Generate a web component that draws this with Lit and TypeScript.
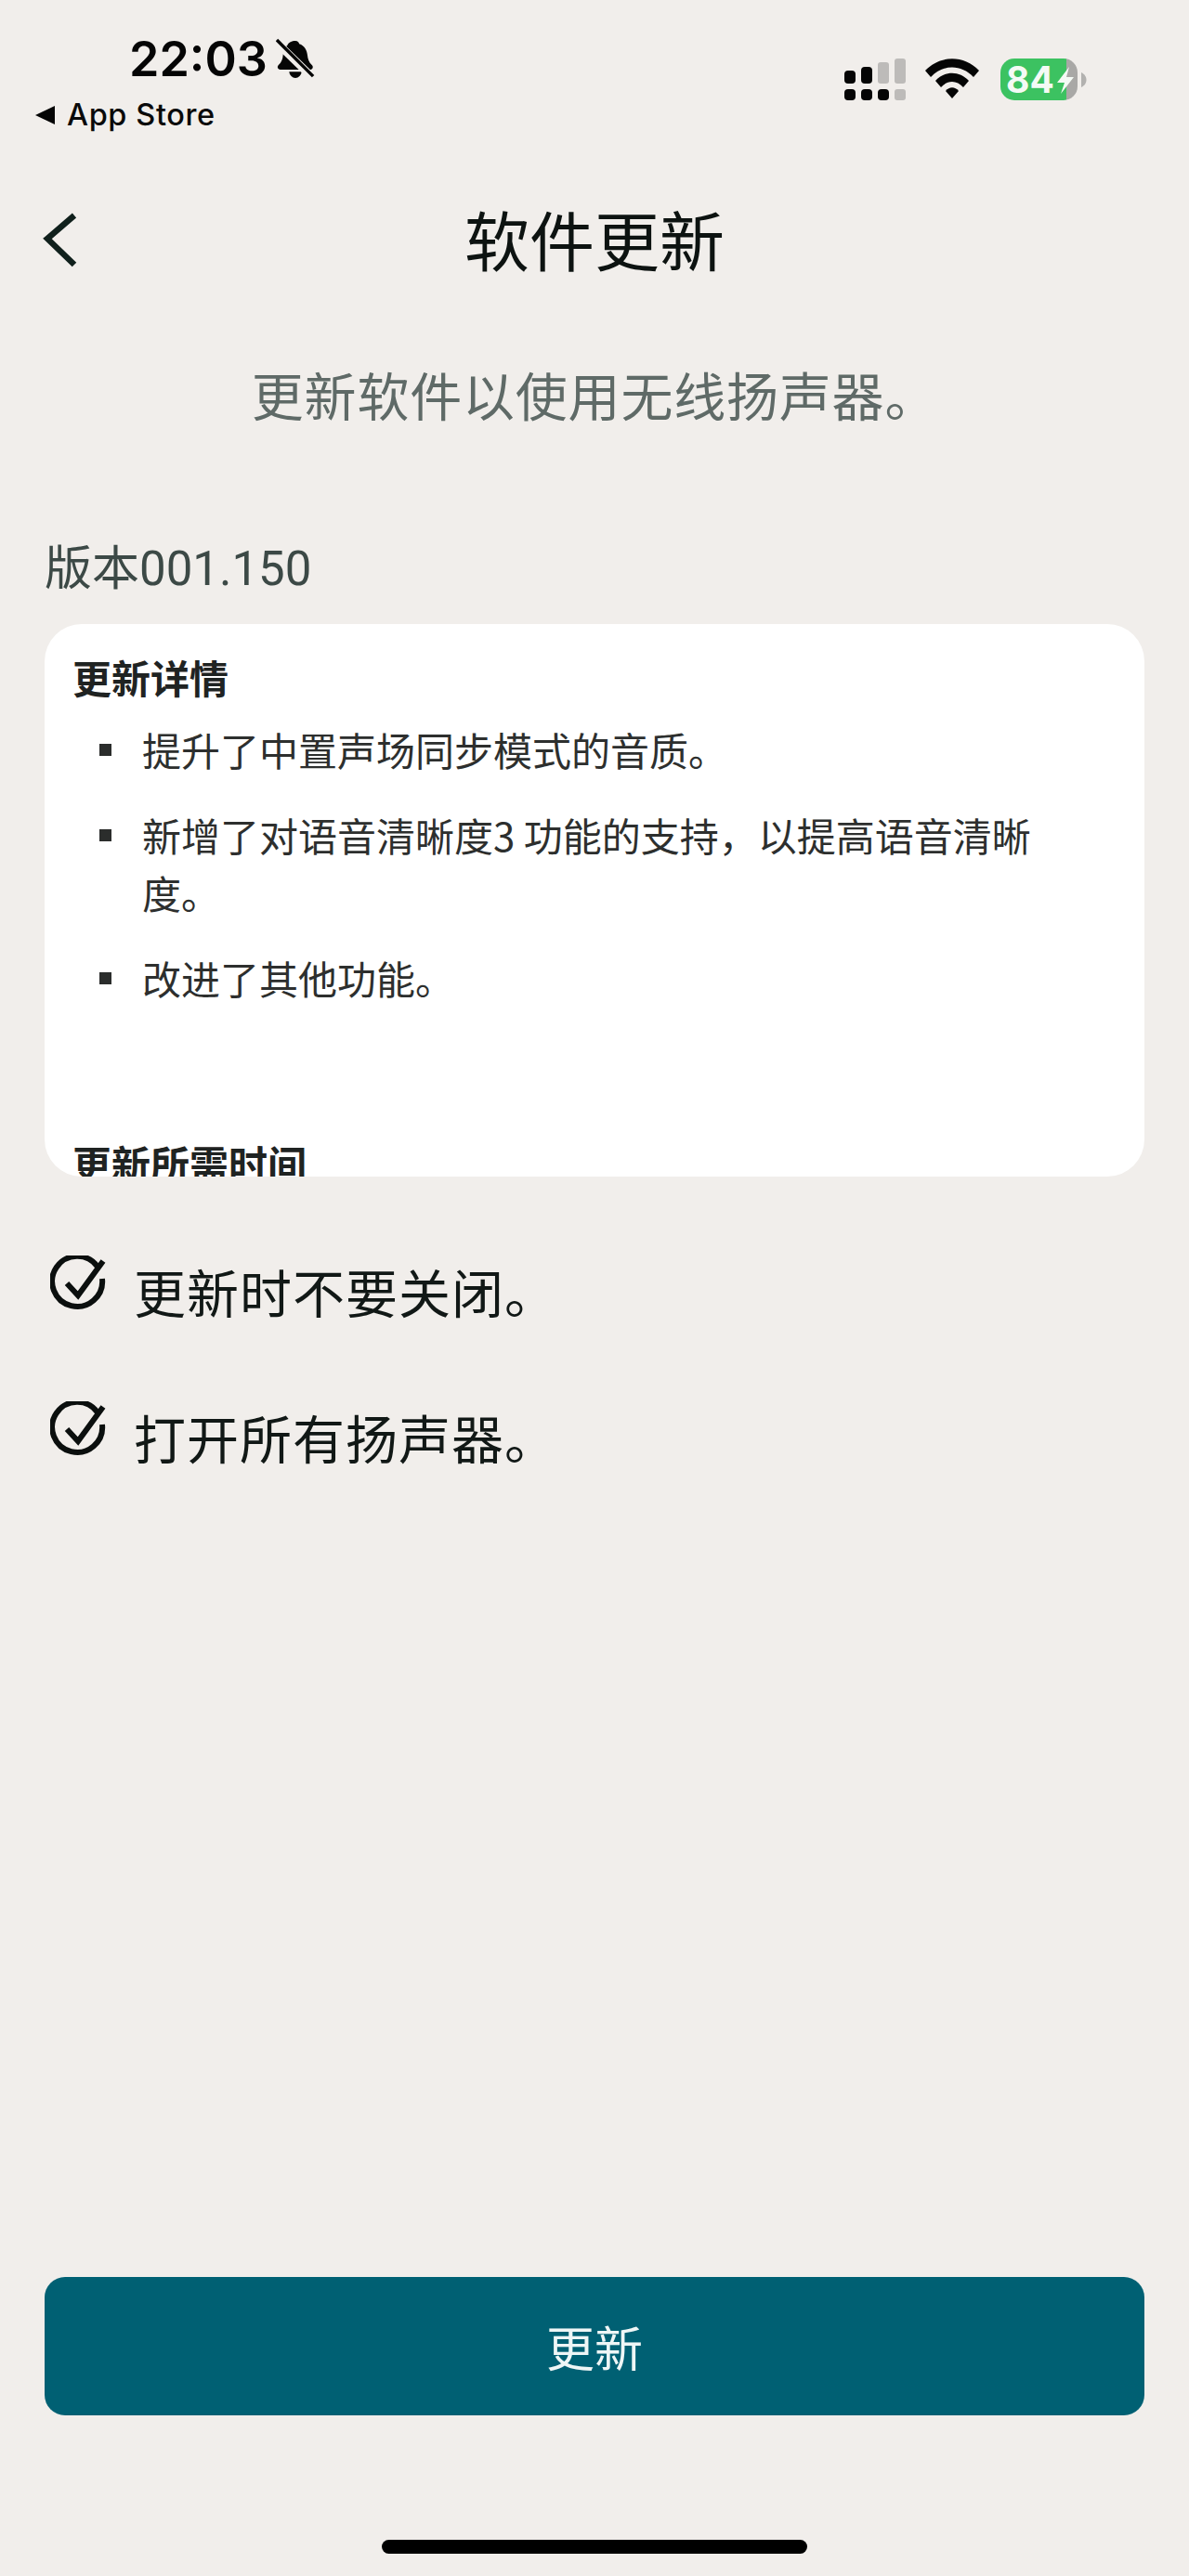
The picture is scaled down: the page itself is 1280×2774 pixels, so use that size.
import { LitElement, html, css, svg } from "lit";
import { customElement } from "lit/decorators.js";

const checkIcon = svg`<svg class="check" width="62" height="62" viewBox="0 0 62 62" fill="none" stroke="#0b0f0e" stroke-width="6">
  <path d="M51 12 A27 27 0 1 0 56 25"/>
  <path d="M18 30 L30 43 L57 6"/>
</svg>`;

@customElement("app-root")
export class AppRoot extends LitElement {
  static styles = css`
    :host { display: block; width: 1280px; height: 2774px; background: #f1eeeb; font-family: "Noto Sans CJK SC", "Noto Sans", sans-serif; overflow: hidden; }
    .page { display: flex; flex-direction: column; height: 2774px; position: relative; }

    .status { height: 205px; display: flex; justify-content: space-between; flex: none; }
    .status-left { padding: 37px 0 0 38px; display: flex; flex-direction: column; }
    .time-row { display: flex; align-items: center; gap: 9px; margin-left: 101px; height: 54px; }
    .time { font: 600 52px/54px Inter, "Liberation Sans", sans-serif; color: #050505; }
    .back-app { display: flex; align-items: center; gap: 12px; margin-top: 16px; height: 34px; }
    .back-app span { font: 500 32.5px/34px Inter, "Liberation Sans", sans-serif; color: #0a0a0a; letter-spacing: 0.6px; }
    .status-right { display: flex; align-items: flex-start; padding: 63px 110px 0 0; gap: 23px; }
    .signal { margin-right: -2px; }

    .nav { height: 104px; flex: none; display: flex; align-items: center; justify-content: center; position: relative; }
    .nav h1 { margin: 0; font-size: 70px; font-weight: 400; line-height: 104px; color: #0d1311; }
    .back { position: absolute; left: 46px; top: 24px; }

    .sub { margin: 73px 0 0; text-align: center; font-size: 56px; letter-spacing: 0.8px; line-height: 84px; color: #5f6a67; font-weight: 400; flex: none; }

    .version { margin: 104px 0 0 48px; font-size: 51px; line-height: 76px; color: #3c4946; flex: none; }
    .version .num { font-family: Roboto, sans-serif; }

    .card { margin: 21px 48px 0; height: 595px; background: #fff; border-radius: 40px; overflow: hidden; flex: none; box-sizing: border-box; padding: 28px 30px 0; }
    .card h2 { margin: 0; font-size: 42px; line-height: 58px; font-weight: 700; color: #1f2322; }
    .card ul { list-style: none; margin: 18px 0 0; padding: 0 70px 0 0; display: flex; flex-direction: column; gap: 30px; }
    .card li { display: flex; align-items: flex-start; font-size: 42px; line-height: 62px; color: #2d2f2e; }
    .bullet { width: 13px; height: 13px; background: #2b2d2c; margin: 25px 33px 0 29px; flex: none; }
    .card h2.next { margin-top: 139px; }

    .checks { margin: 87px 0 0 54px; display: flex; flex-direction: column; gap: 79px; flex: none; }
    .check-row { display: flex; align-items: flex-start; gap: 28px; height: 78px; }
    .check-row span { font-size: 56px; letter-spacing: 1px; line-height: 78px; color: #111816; margin-top: -3px; white-space: nowrap; }
    .check { flex: none; margin-top: -2px; }

    .spacer { flex: 1; }
    .update { margin: 0 48px; height: 149px; border: 0; border-radius: 22px; background: #006073; color: #eef6f6; font: 400 52px/149px "Noto Sans CJK SC", sans-serif; flex: none; padding: 0; text-align: center; }
    .home-wrap { height: 173px; display: flex; justify-content: center; flex: none; padding-top: 134px; box-sizing: border-box; }
    .home { width: 458px; height: 15px; border-radius: 8px; background: #000; }
  `;

  render() {
    return html`<div class="page">
      <div class="status">
        <div class="status-left">
          <div class="time-row">
            <span class="time">22:03</span>
            <svg width="42" height="46" viewBox="0 0 44 46" fill="#060606">
              <path d="M22 2c2.500 0 4 1.600 4.300 3.400 6 2 8.700 7 9.300 13 .3 4 1.600 8 5 11 2 2 1 5-1.500 5H5c-3 0-4-3-2-5 3.400-3 4.800-7 5-11 .5-6 2-9 5-11.500C14 4 18 2 22 2z"/>
              <path d="M15 37h14c-.5 4-3.500 7-7 7s-6.500-3-7-7z"/>
              <path d="M1 4 L42 44" stroke="#f1eeeb" stroke-width="9"/>
              <path d="M1 1 L42 42" stroke="#060606" stroke-width="3.600"/>
            </svg>
          </div>
          <div class="back-app">
            <svg width="22" height="22" viewBox="0 0 22 22" fill="#050505"><path d="M0 11 L21 1 V21 Z"/></svg>
            <span>App Store</span>
          </div>
        </div>
        <div class="status-right">
          <svg class="signal" width="66" height="46" viewBox="0 0 66 46">
            <g fill="#050505">
              <rect x="0" y="13" width="12" height="14" rx="4"/>
              <rect x="18" y="9" width="12" height="18" rx="4"/>
              <rect x="0" y="33" width="12" height="12" rx="4"/>
              <rect x="18" y="33" width="12" height="12" rx="4"/>
              <rect x="36" y="33" width="12" height="12" rx="4"/>
            </g>
            <g fill="#bdbbb9">
              <rect x="36" y="4" width="12" height="23" rx="3"/>
              <rect x="54" y="0" width="12" height="27" rx="3"/>
              <rect x="54" y="33" width="12" height="12" rx="3"/>
            </g>
          </svg>
          <svg width="58" height="44" viewBox="0 0 58 44" fill="#050505">
            <path d="M0 13 C16 -4 42 -4 58 13 L52 20 C39 6 19 6 6 20 Z"/>
            <path d="M11 24 C21 13 37 13 47 24 L41 31 C34 23 24 23 17 31 Z"/>
            <path d="M22 35 C26 30 32 30 36 35 L29 43 Z"/>
          </svg>
          <svg width="93" height="46" viewBox="0 0 93 46">
            <defs><clipPath id="bat"><rect x="0" y="0" width="83" height="45" rx="15"/></clipPath></defs>
            <g clip-path="url(#bat)">
              <rect x="0" y="0" width="71" height="45" fill="#3cc261"/>
              <rect x="71" y="0" width="12" height="45" fill="#a9a8a6"/>
            </g>
            <path d="M87 15 C91 17 92.500 20 92.500 23 C92.500 26 91 29 87 31 Z" fill="#b2b1af"/>
            <text x="6" y="37" font-family="Inter, 'Liberation Sans', sans-serif" font-weight="700" font-size="39" fill="#f4faf5">84</text>
            <path d="M74 9 L61 26 H69 L65 38 L79 20 H71 Z" fill="#f4faf5"/>
          </svg>
        </div>
      </div>

      <div class="nav">
        <svg class="back" width="40" height="60" viewBox="0 0 40 60" fill="none" stroke="#10201c" stroke-width="6.500">
          <path d="M34 3 L5 28 L34 56"/>
        </svg>
        <h1>软件更新</h1>
      </div>

      <p class="sub">更新软件以使用无线扬声器。</p>

      <div class="version">版本<span class="num">001.150</span></div>

      <div class="card">
        <h2>更新详情</h2>
        <ul>
          <li><i class="bullet"></i><span>提升了中置声场同步模式的音质。</span></li>
          <li><i class="bullet"></i><span>新增了对语音清晰度3 功能的支持，以提高语音清晰度。</span></li>
          <li><i class="bullet"></i><span>改进了其他功能。</span></li>
        </ul>
        <h2 class="next">更新所需时间</h2>
      </div>

      <div class="checks">
        <div class="check-row">${checkIcon}<span>更新时不要关闭。</span></div>
        <div class="check-row">${checkIcon}<span>打开所有扬声器。</span></div>
      </div>

      <div class="spacer"></div>
      <button class="update">更新</button>
      <div class="home-wrap"><div class="home"></div></div>
    </div>`;
  }
}
